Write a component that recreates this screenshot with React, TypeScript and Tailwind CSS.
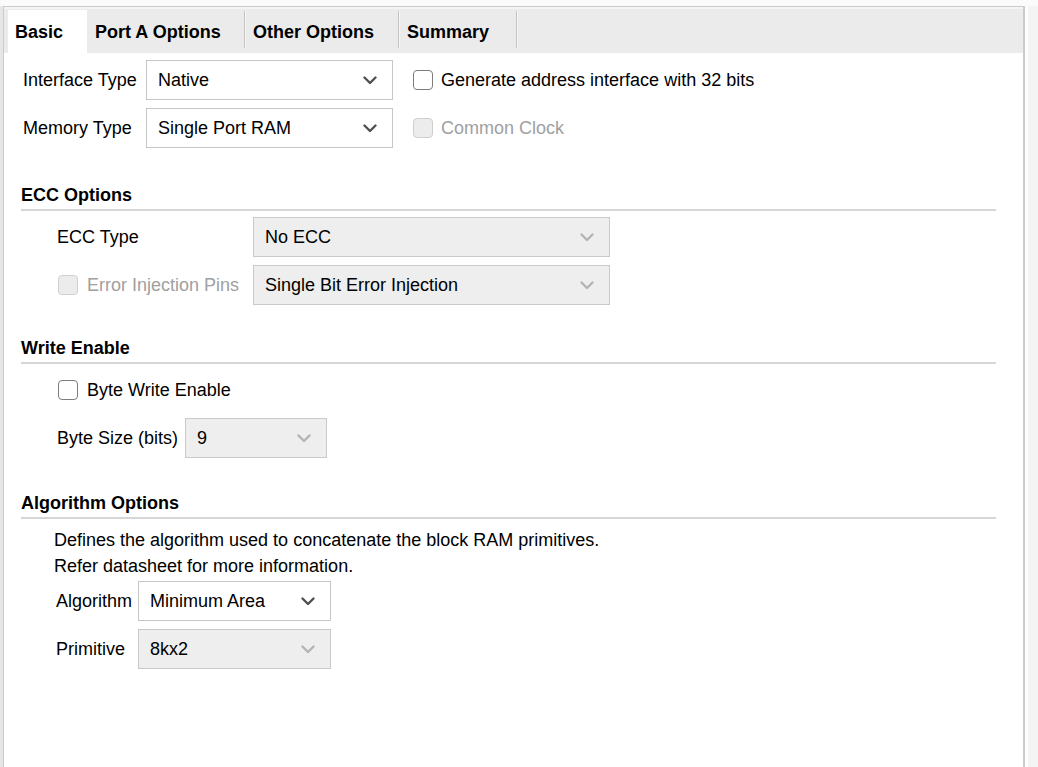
import React from "react";

const Chevron = ({ disabled }: { disabled?: boolean }) => (
  <svg width="14" height="9" viewBox="0 0 14 9" className="shrink-0">
    <path
      d="M1.5 1.5 L7 7 L12.5 1.5"
      fill="none"
      stroke={disabled ? "#b4b4b4" : "#505050"}
      strokeWidth="2.4"
      strokeLinecap="round"
      strokeLinejoin="round"
    />
  </svg>
);

const Select = ({
  value,
  width,
  disabled,
}: {
  value: string;
  width: string;
  disabled?: boolean;
}) => (
  <div
    className={`${width} h-[40px] flex items-center justify-between pl-[11px] pr-[15px] border ${
      disabled ? "bg-[#eeeeee] border-[#c9c9c9]" : "bg-white border-[#c6c6c6]"
    }`}
  >
    <span className="text-black">{value}</span>
    <Chevron disabled={disabled} />
  </div>
);

const Checkbox = ({
  label,
  disabled,
  gap = "gap-[8px]",
}: {
  label: string;
  disabled?: boolean;
  gap?: string;
}) => (
  <div className={`flex items-center ${gap}`}>
    <div
      className={`w-[20px] h-[20px] rounded-[4px] border-[1.5px] ${
        disabled ? "border-[#cfcfcf] bg-[#ececec]" : "border-[#7d7d7d] bg-white"
      }`}
    />
    <span className={disabled ? "text-[#a0a0a0]" : "text-black"}>{label}</span>
  </div>
);

const Heading = ({ title, mt }: { title: string; mt: string }) => (
  <div className={`${mt} pl-[17px] pr-[27px]`}>
    <div className="font-bold leading-[18px] h-[18px] text-black">{title}</div>
    <div className="mt-[5px] h-[2px] bg-[#d6d6d6]" />
  </div>
);

const Tab = ({
  label,
  w,
  pl,
  active,
  sep,
}: {
  label: string;
  w: string;
  pl: string;
  active?: boolean;
  sep?: boolean;
}) => (
  <div className="flex h-full">
    <div
      className={`${w} ${pl} h-full flex items-center font-bold text-black ${
        active ? "bg-white" : ""
      }`}
    >
      {label}
    </div>
    {sep && (
      <div className="flex h-full items-start pt-[1px]">
        <div className="w-[1px] h-[37px] bg-[#c2c2c2]" />
        <div className="w-[1px] h-[37px] bg-[#f7f7f7]" />
      </div>
    )}
  </div>
);

export default function App() {
  return (
    <div
      className="w-[1038px] h-[767px] flex bg-[#fafafa] overflow-hidden text-[18px] leading-[18px]"
      style={{ fontFamily: "'Liberation Sans', Arial, sans-serif" }}
    >
      <div className="w-[3px] flex flex-col">
        <div className="h-[6px] bg-[#fafafa]" />
        <div className="flex-1 bg-[#e6e6e6]" />
      </div>
      <div className="w-[1022px] flex flex-col">
        <div className="h-[6px] bg-[#fbfbfb]" />
        <div className="flex-1 flex flex-col bg-white border-l border-t border-r-2 border-[#cbcbcb]">
          {/* tab bar */}
          <div className="h-[46px] bg-[#ebebeb] pt-[1px] pl-[4px] flex items-stretch border-t-[2px] border-[#f4f4f4]">
            <Tab label="Basic" w="w-[79px]" pl="pl-[7px]" active />
            <Tab label="Port A Options" w="w-[157px]" pl="pl-[8px]" sep />
            <Tab label="Other Options" w="w-[152px]" pl="pl-[7px]" sep />
            <Tab label="Summary" w="w-[116px]" pl="pl-[7px]" sep />
          </div>

          {/* top rows */}
          <div className="mt-[7px] pl-[19px] flex flex-col gap-[8px]">
            <div className="flex items-center h-[40px]">
              <div className="w-[123px]">Interface Type</div>
              <Select value="Native" width="w-[247px]" />
              <div className="ml-[20px]">
                <Checkbox label="Generate address interface with 32 bits" />
              </div>
            </div>
            <div className="flex items-center h-[40px]">
              <div className="w-[123px]">Memory Type</div>
              <Select value="Single Port RAM" width="w-[247px]" />
              <div className="ml-[20px]">
                <Checkbox label="Common Clock" disabled />
              </div>
            </div>
          </div>

          {/* ECC Options */}
          <Heading title="ECC Options" mt="mt-[38px]" />
          <div className="mt-[6px] pl-[53px] flex flex-col gap-[8px]">
            <div className="flex items-center h-[40px]">
              <div className="w-[196px]">ECC Type</div>
              <Select value="No ECC" width="w-[357px]" disabled />
            </div>
            <div className="flex items-center h-[40px]">
              <div className="w-[196px] pl-[1px]">
                <Checkbox label="Error Injection Pins" disabled gap="gap-[9px]" />
              </div>
              <Select
                value="Single Bit Error Injection"
                width="w-[357px]"
                disabled
              />
            </div>
          </div>

          {/* Write Enable */}
          <Heading title="Write Enable" mt="mt-[34px]" />
          <div className="mt-[6px] pl-[53px] flex flex-col gap-[8px]">
            <div className="flex items-center h-[40px] pl-[1px]">
              <Checkbox label="Byte Write Enable" gap="gap-[9px]" />
            </div>
            <div className="flex items-center h-[40px]">
              <div className="w-[128px]">Byte Size (bits)</div>
              <Select value="9" width="w-[142px]" disabled />
            </div>
          </div>

          {/* Algorithm Options */}
          <Heading title="Algorithm Options" mt="mt-[36px]" />
          <div className="mt-[8px] pl-[50px] leading-[26px]">
            <div>Defines the algorithm used to concatenate the block RAM primitives.</div>
            <div>Refer datasheet for more information.</div>
          </div>
          <div className="mt-[2px] pl-[52px] flex flex-col gap-[8px]">
            <div className="flex items-center h-[40px]">
              <div className="w-[82px]">Algorithm</div>
              <Select value="Minimum Area" width="w-[193px]" />
            </div>
            <div className="flex items-center h-[40px]">
              <div className="w-[82px]">Primitive</div>
              <Select value="8kx2" width="w-[193px]" disabled />
            </div>
          </div>
        </div>
      </div>
      <div className="w-[13px] flex flex-col">
        <div className="h-[6px] bg-[#fbfbfb]" />
        <div className="flex-1 bg-[#f4f4f4] border-l-[3px] border-[#fdfdfd]" />
      </div>
    </div>
  );
}
